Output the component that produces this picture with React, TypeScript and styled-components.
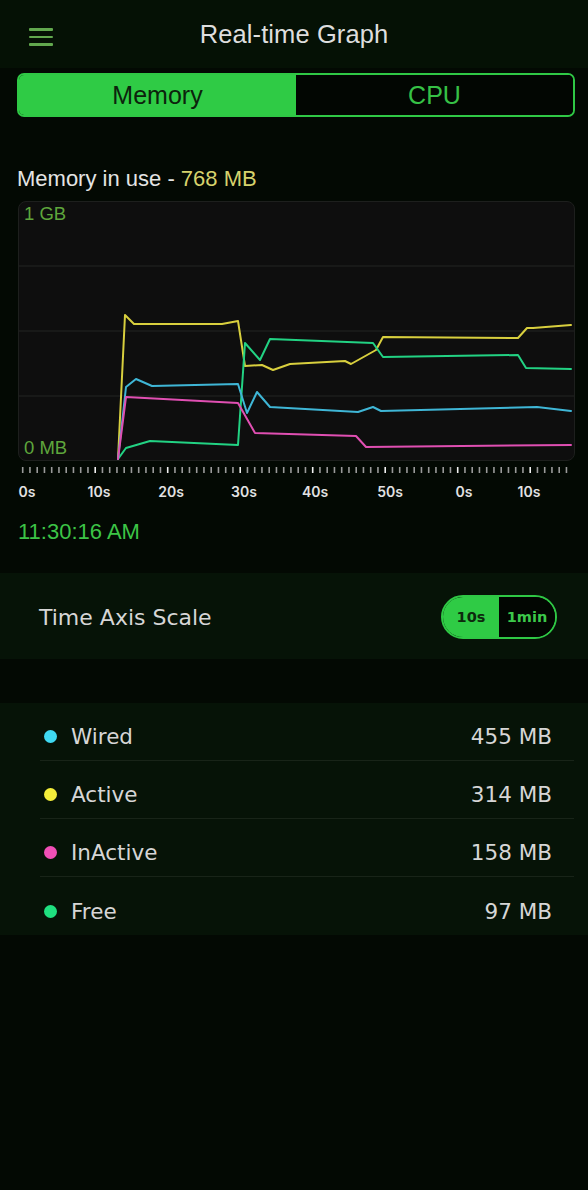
import React from "react";
import styled, { createGlobalStyle } from "styled-components";

const GlobalStyle = createGlobalStyle`
  html, body { margin: 0; padding: 0; background: #030903; }
  body { width: 588px; min-height: 1190px; font-family: "Liberation Sans", Arial, sans-serif; }
  * { box-sizing: border-box; }
`;

const Page = styled.div`
  width: 588px;
  min-height: 1190px;
  background: #030903;
  display: flex;
  flex-direction: column;
`;

const Header = styled.header`
  height: 68px;
  background: #051105;
  display: grid;
  grid-template-columns: 1fr auto 1fr;
  align-items: center;
`;

const MenuButton = styled.div`
  padding-left: 29px;
  padding-top: 6px;
  display: flex;
  flex-direction: column;
  gap: 4.8px;
`;

const MenuLine = styled.span`
  display: block;
  width: 24px;
  height: 2.5px;
  border-radius: 1px;
  background: #62a84e;
`;

const Title = styled.h1`
  margin: 0;
  font-family: "Liberation Sans", Arial, sans-serif;
  font-weight: 400;
  font-size: 25.5px;
  color: #dedede;
  letter-spacing: 0.1px;
`;

const Segmented = styled.div`
  margin: 5px 13px 0 17px;
  height: 44px;
  border: 2px solid #2fc845;
  border-radius: 7px;
  display: grid;
  grid-template-columns: 1fr 1fr;
  overflow: hidden;
`;

const Segment = styled.div<{ $active?: boolean }>`
  display: flex;
  align-items: center;
  justify-content: center;
  font-family: "Liberation Sans", Arial, sans-serif;
  font-size: 25px;
  background: ${(p) => (p.$active ? "#2fcb45" : "#020602")};
  color: ${(p) => (p.$active ? "#0c230c" : "#36c146")};
`;

const UsageLabel = styled.div`
  margin: 50px 0 0 17px;
  font-family: "Liberation Sans", Arial, sans-serif;
  font-size: 22px;
  line-height: 24px;
  color: #e4e4e4;
`;

const UsageValue = styled.span`
  color: #d6d26c;
`;

const ChartBox = styled.div`
  position: relative;
  margin: 10px 13px 0 18px;
  height: 260px;
  background: #0e0e0e;
  border: 1px solid #1d1f1d;
  border-radius: 8px;
  overflow: hidden;
`;

const ChartSvg = styled.svg`
  display: block;
  width: 100%;
  height: 100%;
`;

const AxisValue = styled.span<{ $bottom?: boolean }>`
  position: absolute;
  left: 5px;
  ${(p) => (p.$bottom ? "bottom: 1px;" : "top: 1px;")}
  font-family: "Liberation Sans", Arial, sans-serif;
  font-size: 18.5px;
  line-height: 22px;
  color: #5ea63c;
`;

const AxisSvg = styled.svg`
  display: block;
  width: 588px;
  height: 44px;
`;

const TimeStamp = styled.div`
  margin: 14px 0 0 18px;
  font-family: "Liberation Sans", Arial, sans-serif;
  font-size: 22px;
  line-height: 26px;
  color: #3cc446;
`;

const ScaleSection = styled.section`
  margin-top: 28px;
  height: 86px;
  background: #061307;
  display: flex;
  align-items: center;
  justify-content: space-between;
  padding: 2px 31px 0 39px;
`;

const ScaleLabel = styled.span`
  font-family: "DejaVu Sans", Verdana, sans-serif;
  font-size: 22px;
  color: #d6d6d6;
`;

const Toggle = styled.div`
  width: 116px;
  height: 44px;
  border: 2px solid #2fc845;
  border-radius: 22px;
  overflow: hidden;
  display: grid;
  grid-template-columns: 1fr 1fr;
`;

const ToggleOption = styled.div<{ $active?: boolean }>`
  display: flex;
  align-items: center;
  justify-content: center;
  font-family: "DejaVu Sans", Verdana, sans-serif;
  font-weight: 700;
  font-size: 14.5px;
  background: ${(p) => (p.$active ? "#2fcb45" : "#020602")};
  color: ${(p) => (p.$active ? "#0d2a0d" : "#3cc84a")};
`;

const LegendSection = styled.section`
  margin-top: 44px;
  background: #061307;
  padding: 0 14px 0 40px;
`;

const LegendRow = styled.div<{ $last?: boolean }>`
  height: 58px;
  display: flex;
  align-items: center;
  padding: 10px 22px 0 4px;
  border-bottom: ${(p) => (p.$last ? "none" : "1px solid #182418")};
`;

const Dot = styled.span<{ $color: string }>`
  width: 13px;
  height: 13px;
  border-radius: 50%;
  background: ${(p) => p.$color};
  margin-right: 14px;
  flex: none;
`;

const LegendName = styled.span`
  flex: 1;
  font-family: "DejaVu Sans", Verdana, sans-serif;
  font-size: 21.5px;
  color: #d6d6d6;
`;

const LegendValue = styled.span`
  font-family: "DejaVu Sans", Verdana, sans-serif;
  font-size: 21.5px;
  color: #d6d6d6;
`;

const series = [
  {
    color: "#d8cf3e",
    pts: "118,459 125,315 134,324 222,324 238,321 245,366 262,365 273,370 290,364 345,361 351,364 376,350 383,337 518,338 527,328 533,328 571,325",
  },
  {
    color: "#22d283",
    pts: "118,459 126,448 150,441 238,445 245,343 260,360 270,339 373,343 383,357 518,355 526,368 571,369",
  },
  {
    color: "#3fb6d6",
    pts: "118,459 126,387 136,379 152,386 238,384 247,413 257,392 270,407 358,412 373,407 381,411 537,407 571,411",
  },
  {
    color: "#e04fb2",
    pts: "118,459 126,397 238,403 255,433 356,436 366,447 571,445",
  },
];

const timeLabels = [
  { x: 27, t: "0s" },
  { x: 99, t: "10s" },
  { x: 171, t: "20s" },
  { x: 244, t: "30s" },
  { x: 315, t: "40s" },
  { x: 390, t: "50s" },
  { x: 464, t: "0s" },
  { x: 529, t: "10s" },
];

const legend = [
  { name: "Wired", value: "455 MB", color: "#3fd9f2" },
  { name: "Active", value: "314 MB", color: "#f4ee3a" },
  { name: "InActive", value: "158 MB", color: "#f04fb6" },
  { name: "Free", value: "97 MB", color: "#1fe07f" },
];

export default function App() {
  const ticks = Array.from({ length: 76 }, (_, k) => k);
  return (
    <>
      <GlobalStyle />
      <Page>
        <Header>
          <MenuButton>
            <MenuLine />
            <MenuLine />
            <MenuLine />
          </MenuButton>
          <Title>Real-time Graph</Title>
          <div />
        </Header>

        <Segmented>
          <Segment $active>Memory</Segment>
          <Segment>CPU</Segment>
        </Segmented>

        <UsageLabel>
          Memory in use - <UsageValue>768 MB</UsageValue>
        </UsageLabel>

        <ChartBox>
          <ChartSvg viewBox="19 202 555 258" preserveAspectRatio="none">
            {[266, 331, 396].map((y) => (
              <line key={y} x1="0" x2="600" y1={y} y2={y} stroke="#232423" strokeWidth="1" />
            ))}
            {series.map((s) => (
              <polyline
                key={s.color}
                points={s.pts}
                fill="none"
                stroke={s.color}
                strokeWidth="2"
                strokeLinejoin="round"
                strokeLinecap="round"
              />
            ))}
          </ChartSvg>
          <AxisValue>1 GB</AxisValue>
          <AxisValue $bottom>0 MB</AxisValue>
        </ChartBox>

        <AxisSvg viewBox="0 0 588 44">
          {ticks.map((k) => {
            const x = 22.7 + 7.25 * k;
            const bright = k % 10 === 0 && k > 0;
            return (
              <line
                key={k}
                x1={x}
                x2={x}
                y1={6}
                y2={12}
                stroke={bright ? "#f0f0f0" : "#9a9a9a"}
                strokeWidth="1.6"
              />
            );
          })}
          {timeLabels.map((l, i) => (
            <text
              key={i}
              x={l.x}
              y={36}
              textAnchor="middle"
              fontFamily="Inter, 'DejaVu Sans', sans-serif"
              fontWeight={600}
              fontSize="14"
              fill="#e2e2e2"
            >
              {l.t}
            </text>
          ))}
        </AxisSvg>

        <TimeStamp>11:30:16 AM</TimeStamp>

        <ScaleSection>
          <ScaleLabel>Time Axis Scale</ScaleLabel>
          <Toggle>
            <ToggleOption $active>10s</ToggleOption>
            <ToggleOption>1min</ToggleOption>
          </Toggle>
        </ScaleSection>

        <LegendSection>
          {legend.map((l, i) => (
            <LegendRow key={l.name} $last={i === legend.length - 1}>
              <Dot $color={l.color} />
              <LegendName>{l.name}</LegendName>
              <LegendValue>{l.value}</LegendValue>
            </LegendRow>
          ))}
        </LegendSection>
      </Page>
    </>
  );
}
